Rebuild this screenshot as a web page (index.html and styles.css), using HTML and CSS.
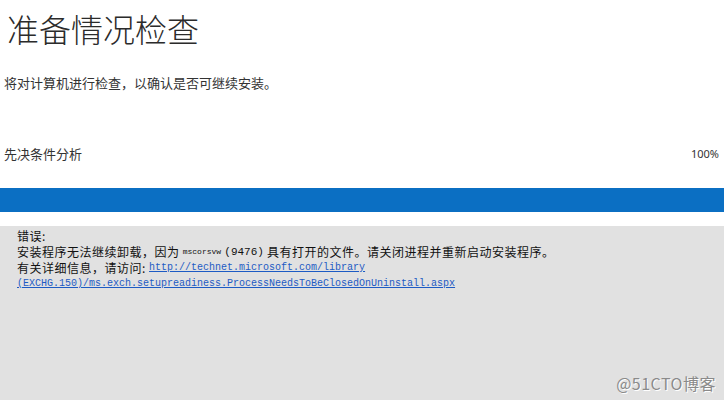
FILE: index.html
```html
<!DOCTYPE html>
<html lang="zh-CN">
<head>
    <meta charset="UTF-8">
    <title>准备情况检查</title>
    <link rel="stylesheet" href="styles.css">
</head>
<body>
    <div class="page">
        <h1 class="title">准备情况检查</h1>
        <p class="desc">将对计算机进行检查，以确认是否可继续安装。</p>

        <div class="status-row">
            <span>先决条件分析</span>
            <span class="percent">100%</span>
        </div>
        <div class="progress">
            <div class="progress-fill" style="width: 100%"></div>
        </div>

        <div class="error-panel">
            <div class="line">错误:</div>
            <div class="line">安装程序无法继续卸载，因为 <span class="code">mscorsvw</span> <span class="num">(9476)</span> 具有打开的文件。请关闭进程并重新启动安装程序。</div>
            <div class="line">有关详细信息，请访问: <a class="link" href="#">http://technet.microsoft.com/library</a></div>
            <div class="line"><a class="link" href="#">(EXCHG.150)/ms.exch.setupreadiness.ProcessNeedsToBeClosedOnUninstall.aspx</a></div>
            <div class="watermark">@51CTO博客</div>
        </div>
    </div>
</body>
</html>
```

FILE: styles.css
```css
body {
    margin: 0;
    background-color: #ffffff;
    font-family: "Noto Sans CJK SC", "Noto Sans", sans-serif;
    color: #333333;
}

.page {
    display: flex;
    flex-direction: column;
    min-height: 100vh;
}

.title {
    margin: 0;
    padding: 8px 0 0 7px;
    font-size: 32px;
    font-weight: 300;
    line-height: 40px;
    color: #2b2b2b;
}

.desc {
    margin: 25px 0 0 4px;
    font-size: 13px;
    line-height: 20px;
    color: #333333;
}

.status-row {
    display: flex;
    justify-content: space-between;
    margin-top: 51px;
    padding: 0 5px 0 4px;
    font-size: 13px;
    line-height: 20px;
}

.percent {
    font-family: "Noto Sans", sans-serif;
    font-size: 11px;
}

.progress {
    margin-top: 24px;
    height: 24px;
    background-color: #f0f0f0;
}

.progress-fill {
    height: 100%;
    background-color: #0b6fc3;
}

.error-panel {
    position: relative;
    flex: 1;
    margin-top: 14px;
    padding: 2px 0 0 17px;
    background-color: #e1e1e1;
    font-size: 12px;
    line-height: 16px;
    letter-spacing: 0.5px;
    color: #111111;
}

.line {
    height: 16px;
    white-space: nowrap;
}

.code,
.num,
.link {
    font-family: "Liberation Mono", monospace;
    line-height: 16px;
    letter-spacing: 0;
    vertical-align: top;
}

.code {
    font-size: 8px;
}

.num {
    font-size: 11px;
}

.link {
    margin-left: 4px;
    font-size: 10px;
    color: #1d5bc4;
    text-decoration: underline;
}

.line .link:only-child {
    margin-left: 0;
}

.watermark {
    position: absolute;
    right: 8px;
    bottom: 7px;
    font-size: 16px;
    line-height: 20px;
    letter-spacing: 0.5px;
    color: #8a8a8a;
    text-shadow: 1px 1px 0 #ffffff;
}
```
